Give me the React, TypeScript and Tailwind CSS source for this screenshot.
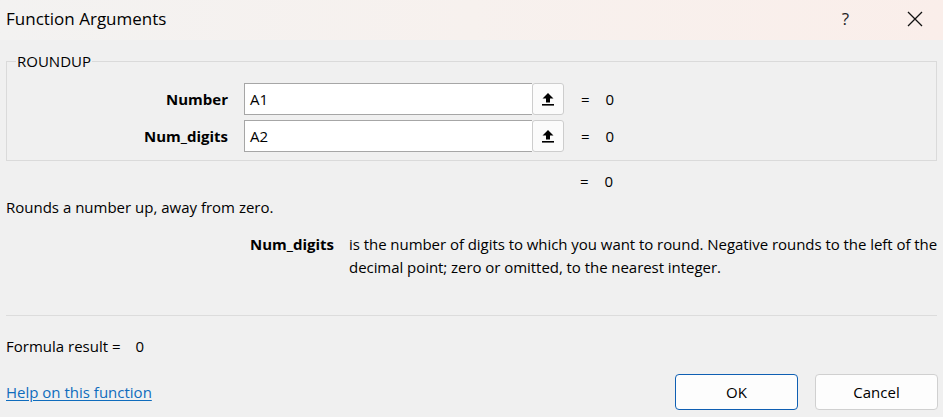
import React from "react";

const font = { fontFamily: '"Segoe UI", "Open Sans", "Noto Sans", sans-serif' };

const RefIcon: React.FC = () => (
  <svg width="12" height="13" viewBox="0 0 12 13" className="block">
    <polygon points="6,0 11.5,5.5 8,5.5 8,9.5 4,9.5 4,5.5 0.5,5.5" fill="#000" />
    <rect x="0" y="11" width="12" height="1.6" fill="#000" />
  </svg>
);

interface ArgRowProps {
  label: string;
  value: string;
  result: string;
}

const ArgRow: React.FC<ArgRowProps> = ({ label, value, result }) => (
  <div className="flex items-center h-[32px]">
    <div className="w-[221px] text-right font-bold text-[15px] text-black">{label}</div>
    <div className="ml-[16px] flex h-[32px]">
      <div className="w-[288px] h-full border border-r-0 border-[#a6a6a6] bg-white flex items-center px-[5px] text-[15px] text-black">
        {value}
      </div>
      <button className="w-[32px] h-full border border-[#cdcdcd] rounded-[3px] bg-[#fbfbfb] flex items-center justify-center">
        <RefIcon />
      </button>
    </div>
    <span className="ml-[17px] text-[15px] text-black">=</span>
    <span className="ml-[16px] text-[15px] text-black">{result}</span>
  </div>
);

export default function App() {
  return (
    <div className="w-[943px] h-[417px] bg-[#f0f0f0] flex flex-col text-black overflow-hidden" style={font}>
      {/* title bar */}
      <div className="h-[40px] flex items-center bg-gradient-to-r from-[#f3f2f1] via-[#f7f1ee] to-[#faeeea]">
        <span className="ml-[6px] text-[17px] leading-none -mt-[3px]">Function Arguments</span>
        <span className="ml-auto text-[17px] text-[#222] -mt-[3px]">?</span>
        <svg width="16" height="16" viewBox="0 0 16 16" className="ml-[58px] mr-[20px] -mt-[3px]">
          <path d="M1 1 L15 15 M15 1 L1 15" stroke="#111" strokeWidth="1.3" />
        </svg>
      </div>

      {/* argument group */}
      <div className="relative mt-[21px] mx-[6px] h-[100px] border border-[#dadada] pt-[21px] flex flex-col gap-[5px]">
        <span className="absolute -top-[11px] left-[9px] px-[1px] bg-[#f0f0f0] text-[15px] leading-[20px]">ROUNDUP</span>
        <ArgRow label="Number" value="A1" result="0" />
        <ArgRow label="Num_digits" value="A2" result="0" />
      </div>

      <div className="mt-[10px] flex leading-[20px] text-[15px]">
        <span className="ml-[580px]">=</span>
        <span className="ml-[16px]">0</span>
      </div>

      <div className="mt-[6px] ml-[6px] leading-[20px] text-[15px]">Rounds a number up, away from zero.</div>

      <div className="mt-[16px] flex text-[15px] leading-[23px]">
        <div className="w-[334px] text-right font-bold">Num_digits</div>
        <div className="ml-[15px] whitespace-nowrap tracking-[-0.05px]">
          is the number of digits to which you want to round. Negative rounds to the left of the
          <br />
          decimal point; zero or omitted, to the nearest integer.
        </div>
      </div>

      <div className="mt-[36px] mx-[6px] h-px bg-[#dcdcdc]" />

      <div className="mt-[20px] ml-[6px] flex leading-[20px] text-[15px]">
        <span>Formula result =</span>
        <span className="ml-[15px]">0</span>
      </div>

      <div className="mt-[18px] flex items-center h-[36px] pl-[6px] pr-[5px]">
        <a href="#" className="text-[15px] text-[#0f6cbd] underline underline-offset-2">
          Help on this function
        </a>
        <button className="ml-auto w-[123px] h-[36px] border border-[#0f5fb3] rounded-[4px] bg-[#fdfdfd] text-[15px]">
          OK
        </button>
        <button className="ml-[17px] w-[123px] h-[36px] border border-[#d0d0d0] rounded-[4px] bg-[#fdfdfd] text-[15px]">
          Cancel
        </button>
      </div>
    </div>
  );
}
